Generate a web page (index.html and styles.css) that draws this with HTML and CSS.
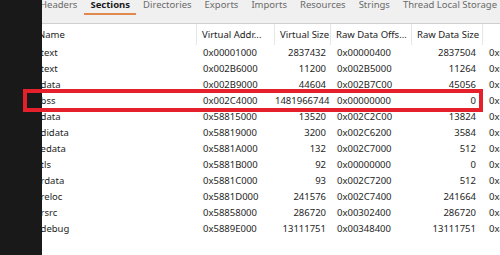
FILE: index.html
```html
<!DOCTYPE html>
<html lang="en">
<head>
    <meta charset="UTF-8">
    <title>Sections</title>
    <link rel="stylesheet" href="styles.css">
</head>
<body>
    <div class="ventana">
        <div class="lateral"></div>

        <div class="principal">
            <!-- Pestañas -->
            <div class="pestanas">
                <div class="pestana">Headers</div>
                <div class="pestana activa">Sections</div>
                <div class="pestana">Directories</div>
                <div class="pestana">Exports</div>
                <div class="pestana">Imports</div>
                <div class="pestana">Resources</div>
                <div class="pestana">Strings</div>
                <div class="pestana">Thread Local Storage</div>
            </div>

            <!-- Tabla de secciones -->
            <div class="tabla">
                <div class="cab nombre">Name</div>
                <div class="cab">Virtual Addr...</div>
                <div class="cab">Virtual Size</div>
                <div class="cab">Raw Data Offs...</div>
                <div class="cab">Raw Data Size</div>
                <div class="cab ultima"></div>
            </div>
            <div class="tabla" id="filas"></div>
        </div>

        <!-- Marca roja sobre .bss -->
        <div class="marca"></div>
    </div>

    <script>
        const secciones = [
            ['.text', '0x00001000', '2837432', '0x00000400', '2837504', '0x60000020'],
            ['.text', '0x002B6000', '11200', '0x002B5000', '11264', '0x60000020'],
            ['.data', '0x002B9000', '44604', '0x002B7C00', '45056', '0xC0000040'],
            ['.bss', '0x002C4000', '1481966744', '0x00000000', '0', '0xC0000000'],
            ['.data', '0x58815000', '13520', '0x002C2C00', '13824', '0xC0000040'],
            ['.didata', '0x58819000', '3200', '0x002C6200', '3584', '0xC0000040'],
            ['.edata', '0x5881A000', '132', '0x002C7000', '512', '0x40000040'],
            ['.tls', '0x5881B000', '92', '0x00000000', '0', '0xC0000000'],
            ['.rdata', '0x5881C000', '93', '0x002C7200', '512', '0x40000040'],
            ['.reloc', '0x5881D000', '241576', '0x002C7400', '241664', '0x42000040'],
            ['.rsrc', '0x58858000', '286720', '0x00302400', '286720', '0x40000040'],
            ['.debug', '0x5889E000', '13111751', '0x00348400', '13111751', '0x42000040']
        ];

        const filas = document.getElementById('filas');
        const clases = ['celda nombre', 'celda', 'celda num', 'celda', 'celda num ancho', 'celda'];

        secciones.forEach(fila => {
            fila.forEach((valor, i) => {
                const celda = document.createElement('div');
                celda.className = clases[i];
                celda.textContent = valor;
                filas.appendChild(celda);
            });
        });
    </script>
</body>
</html>
```

FILE: styles.css
```css
* {
    box-sizing: border-box;
}

body {
    margin: 0;
    font-family: "Noto Sans", sans-serif;
    font-size: 9.5px;
    color: #1e1e1e;
    background-color: #fff;
}

.ventana {
    position: relative;
    display: flex;
    width: 500px;
    height: 255px;
    overflow: hidden;
}

.lateral {
    width: 42px;
    flex-shrink: 0;
    background-color: #191919;
}

.principal {
    flex: 1;
    overflow: hidden;
    background-color: #fff;
}

/* Pestañas */
.pestanas {
    display: flex;
    gap: 1px;
    height: 24px;
    margin-left: -8px;
    background-color: #f0f0f0;
    border-bottom: 1px solid #cfcfcf;
    white-space: nowrap;
}

.pestana {
    margin-top: -1px;
    height: 16px;
    padding: 0 6px 3px;
    line-height: 11px;
    color: #6a6a6a;
    border-bottom: 2px solid transparent;
}

.pestana.activa {
    font-weight: bold;
    color: #1a1a1a;
    border-bottom-color: #e0884e;
}

/* Tabla */
.tabla {
    display: grid;
    grid-template-columns: 155px 78px 56px 81px 71px 60px;
    white-space: nowrap;
}

.cab {
    height: 21px;
    line-height: 21px;
    padding-left: 5px;
    border-right: 1px solid #e6e6e6;
    overflow: hidden;
    color: #222;
}

.cab.ultima {
    border-right: none;
}

.celda {
    height: 16px;
    line-height: 16px;
    padding-left: 6px;
    overflow: hidden;
}

.nombre {
    padding-left: 0;
    text-indent: -4px;
    overflow: visible;
}

.num {
    text-align: right;
    padding-left: 0;
    padding-right: 5px;
}

.num.ancho {
    padding-right: 7px;
    overflow: visible;
}

.marca {
    position: absolute;
    left: 23px;
    top: 89px;
    width: 460px;
    height: 23px;
    border: 4px solid #e4202a;
}
```
